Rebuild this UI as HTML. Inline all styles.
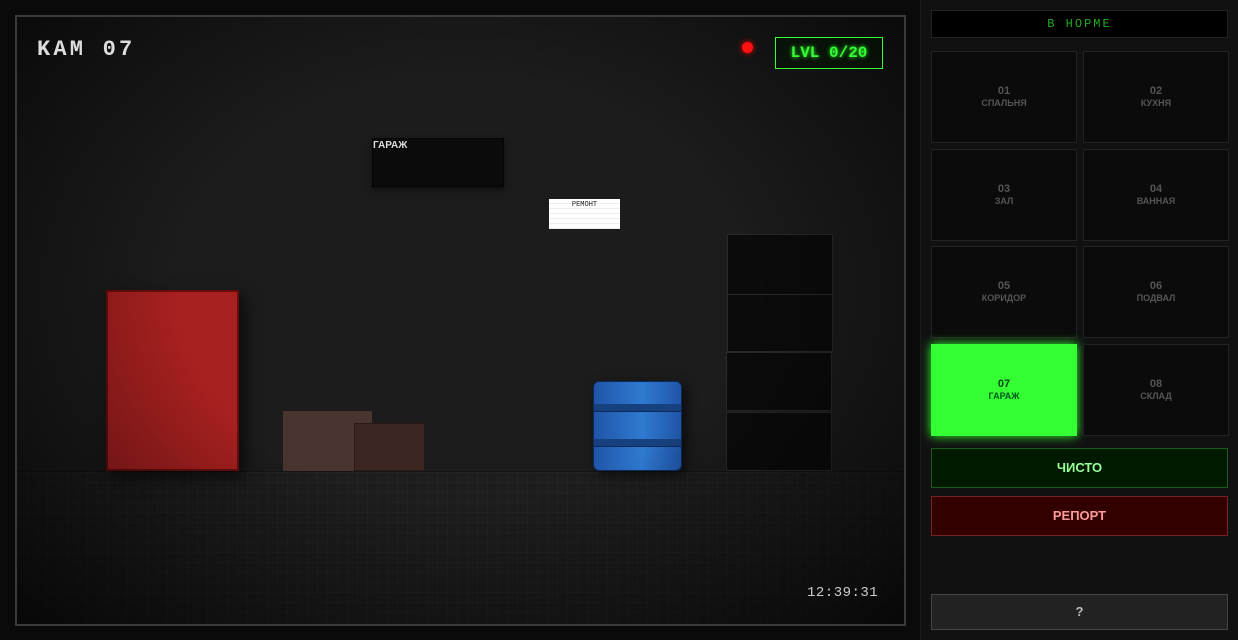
<!DOCTYPE html>
<html><head><meta charset="utf-8"><style>
*{margin:0;padding:0;box-sizing:border-box}
body{width:1238px;height:640px;background:#0a0a0a;position:relative;overflow:hidden;font-family:"Liberation Sans","DejaVu Sans",sans-serif}
.a{position:absolute}
#cam{left:15px;top:15px;width:891px;height:611px;border:2px solid #3a3a3a;background:#1c1c1c;overflow:hidden}
#floor{left:0;top:454px;width:100%;height:160px;background-color:#1d1d1d;background-image:linear-gradient(rgba(255,255,255,.025) 1px,transparent 1px),linear-gradient(90deg,rgba(255,255,255,.025) 1px,transparent 1px);background-size:10px 10px;border-top:1px solid #151515}
#vig{left:0;top:0;width:100%;height:100%;background:radial-gradient(ellipse at 50% 45%,rgba(0,0,0,0) 45%,rgba(0,0,0,.75) 100%);pointer-events:none}
.mono{font-family:"Liberation Mono","DejaVu Sans Mono",monospace}
#side{left:920px;top:0;width:318px;height:640px;background:#111;border-left:1px solid #1c1c1c}
.cell{position:absolute;width:146px;height:92px;background:#0b0b0b;border:1px solid #222;text-align:center;color:#555;font-weight:bold;display:flex;flex-direction:column;justify-content:center;align-items:center}
.cell b{font-size:11px;line-height:13px}
.cell span{font-size:9px;line-height:11px}
.shelf{position:absolute;left:710px;width:106px;background:#0b0b0b;border:1px solid #2a2a2a}
</style></head><body>
<div id="cam" class="a">
 <div id="floor" class="a"></div>
 <div class="a" style="left:355px;top:121px;width:132px;height:49px;background:#0b0b0b;border:1px solid #050505;box-shadow:0 3px 6px rgba(0,0,0,.5)"><div style="color:#ddd;font-size:10px;font-weight:bold;padding:1px 0 0 0">ГАРАЖ</div></div>
 <div class="a mono" style="left:532px;top:182px;width:71px;height:30px;background:repeating-linear-gradient(#fff 0 4px,#eee 4px 5px);color:#222;font-size:7px;text-align:center;padding-top:2px">РЕМОНТ</div>
 <div class="shelf" style="top:217px;height:61px"></div>
 <div class="shelf" style="top:277px;height:58px"></div>
 <div class="shelf" style="top:335px;height:59px;left:709px"></div>
 <div class="shelf" style="top:395px;height:59px;left:709px"></div>
 <div class="a" style="left:89px;top:273px;width:133px;height:181px;background:#a82020;border:2px solid #6a0c0c;box-shadow:6px 6px 14px rgba(0,0,0,.6)"></div>
 <div class="a" style="left:266px;top:394px;width:89px;height:60px;background:#4a3430"></div>
 <div class="a" style="left:337px;top:406px;width:71px;height:48px;background:#3b2621;border:1px solid #2a1a16"></div>
 <div class="a" style="left:576px;top:364px;width:89px;height:90px;border-radius:6px;border:1px solid #0c2a5a;background:linear-gradient(90deg,#1f55a8,#2f7ad0 55%,#1f55a8);box-shadow:4px 4px 12px rgba(0,0,0,.6);overflow:hidden">
  <div class="a" style="left:0;top:22px;width:100%;height:8px;background:#17407e;border-bottom:1px solid #0c2a5a"></div>
  <div class="a" style="left:0;top:57px;width:100%;height:8px;background:#17407e;border-bottom:1px solid #0c2a5a"></div>
 </div>
 <div id="vig" class="a"></div>
 <div class="a mono" style="left:20px;top:20px;color:#ddd;font-size:22px;font-weight:bold;letter-spacing:3.2px">KAM 07</div>
 <div class="a" style="left:725px;top:25px;width:11px;height:11px;border-radius:50%;background:#f11;box-shadow:0 0 6px #f00"></div>
 <div class="a mono" style="left:758px;top:20px;width:108px;height:32px;border:1px solid #3f3;background:rgba(0,20,0,.5);color:#3f3;font-size:16px;font-weight:bold;text-align:center;line-height:30px;text-shadow:0 0 4px #3f3">LVL 0/20</div>
 <div class="a mono" style="left:790px;top:568px;color:#ccc;font-size:14px;letter-spacing:.5px">12:39:31</div>
</div>
<div id="side" class="a">
 <div class="a mono" style="left:10px;top:10px;width:297px;height:28px;background:#000;border:1px solid #222;color:#2a2;font-size:12px;text-align:center;line-height:26px;letter-spacing:2px">В НОРМЕ</div>
 <div class="cell" style="left:10px;top:51px"><b>01</b><span>СПАЛЬНЯ</span></div>
 <div class="cell" style="left:162px;top:51px"><b>02</b><span>КУХНЯ</span></div>
 <div class="cell" style="left:10px;top:149px"><b>03</b><span>ЗАЛ</span></div>
 <div class="cell" style="left:162px;top:149px"><b>04</b><span>ВАННАЯ</span></div>
 <div class="cell" style="left:10px;top:246px"><b>05</b><span>КОРИДОР</span></div>
 <div class="cell" style="left:162px;top:246px"><b>06</b><span>ПОДВАЛ</span></div>
 <div class="cell" style="left:10px;top:344px;background:#33ff33;border-color:#33ff33;color:#063;box-shadow:0 0 10px #3f3"><b style="color:#041">07</b><span style="color:#052">ГАРАЖ</span></div>
 <div class="cell" style="left:162px;top:344px"><b>08</b><span>СКЛАД</span></div>
 <div class="a" style="left:10px;top:448px;width:297px;height:40px;background:#001a00;border:1px solid #1a5a1a;color:#9f9;font-size:13px;font-weight:bold;text-align:center;line-height:38px">ЧИСТО</div>
 <div class="a" style="left:10px;top:496px;width:297px;height:40px;background:#300;border:1px solid #722;color:#f99;font-size:13px;font-weight:bold;text-align:center;line-height:38px">РЕПОРТ</div>
 <div class="a" style="left:10px;top:594px;width:297px;height:36px;background:#222;border:1px solid #444;color:#bbb;font-size:13px;font-weight:bold;text-align:center;line-height:34px">?</div>
</div>
</body></html>
